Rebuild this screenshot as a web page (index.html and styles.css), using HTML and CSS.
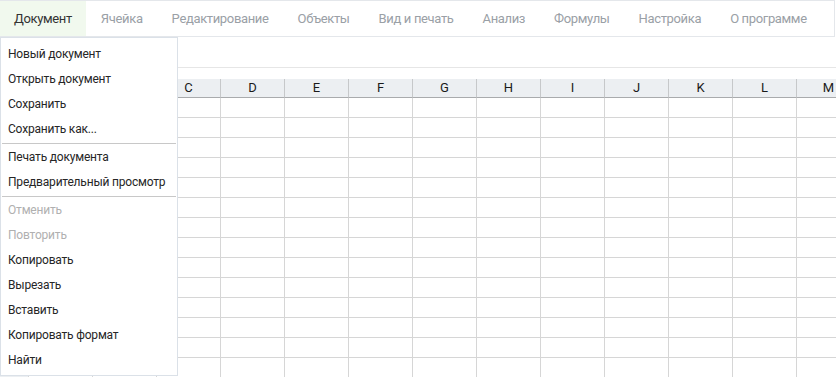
FILE: index.html
```html
<!DOCTYPE html>
<html lang="ru">
<head>
    <meta charset="UTF-8">
    <meta name="viewport" content="width=device-width, initial-scale=1.0">
    <title>Таблица</title>
    <link rel="stylesheet" href="styles.css">
</head>
<body>

<div class="menubar">
    <div class="tab active">Документ</div>
    <div class="tab">Ячейка</div>
    <div class="tab">Редактирование</div>
    <div class="tab">Объекты</div>
    <div class="tab">Вид и печать</div>
    <div class="tab">Анализ</div>
    <div class="tab">Формулы</div>
    <div class="tab">Настройка</div>
    <div class="tab">О программе</div>
</div>

<div class="toolbar"></div>

<div class="sheet">
    <div class="grid" id="grid"></div>
</div>

<div class="dropdown">
    <div class="item">Новый документ</div>
    <div class="item">Открыть документ</div>
    <div class="item">Сохранить</div>
    <div class="item">Сохранить как...</div>
    <div class="sep"></div>
    <div class="item">Печать документа</div>
    <div class="item">Предварительный просмотр</div>
    <div class="sep"></div>
    <div class="item disabled">Отменить</div>
    <div class="item disabled">Повторить</div>
    <div class="item">Копировать</div>
    <div class="item">Вырезать</div>
    <div class="item">Вставить</div>
    <div class="item">Копировать формат</div>
    <div class="item">Найти</div>
</div>

<script>
    // A and B sit under the open menu, so their labels are left blank
    var cols = ['', '', 'C', 'D', 'E', 'F', 'G', 'H', 'I', 'J', 'K', 'L', 'M'];
    var grid = document.getElementById('grid');
    var html = '<div class="hcell corner"></div>';
    cols.forEach(function (c) {
        html += '<div class="hcell">' + c + '</div>';
    });
    for (var r = 1; r <= 14; r++) {
        html += '<div class="cell rowhead"></div>';
        cols.forEach(function () {
            html += '<div class="cell"></div>';
        });
    }
    grid.innerHTML = html;
</script>

</body>
</html>
```

FILE: styles.css
```css
body {
    margin: 0;
    font-family: Roboto, "Noto Sans", sans-serif;
    font-size: 13px;
    color: #333;
    background: #fff;
    width: 836px;
    height: 377px;
    overflow: hidden;
    position: relative;
}

.menubar {
    display: flex;
    height: 35px;
    border-top: 1px solid #e4e7eb;
    border-bottom: 1px solid #e4e7eb;
    border-right: 1px solid #e4e7eb;
    width: 834px;
}

.tab {
    padding: 0 14px 0 14px;
    margin-right: 1px;
    line-height: 35px;
    color: #9aa0a6;
    letter-spacing: -0.35px;
    white-space: nowrap;
}

.tab.active {
    background: #f1f9ee;
    color: #333;
}

.toolbar {
    height: 30px;
    border-bottom: 1px solid #e6e6e6;
    margin-bottom: 11px;
}

.sheet {
    overflow: hidden;
}

.grid {
    display: grid;
    grid-template-columns: 29px repeat(13, 64px);
    grid-auto-rows: 20px;
    grid-template-rows: 19px;
}

.hcell {
    background: #eceff2;
    border-bottom: 1px solid #a9abad;
    border-right: 1px solid #c6c8ca;
    text-align: center;
    line-height: 18px;
    font-size: 13px;
    color: #1a1a1a;
    box-sizing: border-box;
}

.cell {
    border-bottom: 1px solid #d6d6d6;
    border-right: 1px solid #d6d6d6;
    box-sizing: border-box;
}

.rowhead {
    background: #eceff2;
}

.dropdown {
    position: absolute;
    left: 0;
    top: 37px;
    width: 176px;
    padding: 4px 0 2px 0;
    background: #fff;
    border: 1px solid #dbe1e8;
    font-size: 12px;
    letter-spacing: -0.2px;
}

.item {
    height: 25px;
    line-height: 25px;
    padding-left: 7px;
    white-space: nowrap;
    color: #262626;
}

.item.disabled {
    color: #b0b0b0;
}

.sep {
    border-top: 1px solid #c8c8c8;
    margin: 1px 1px 1px 1px;
}
```
